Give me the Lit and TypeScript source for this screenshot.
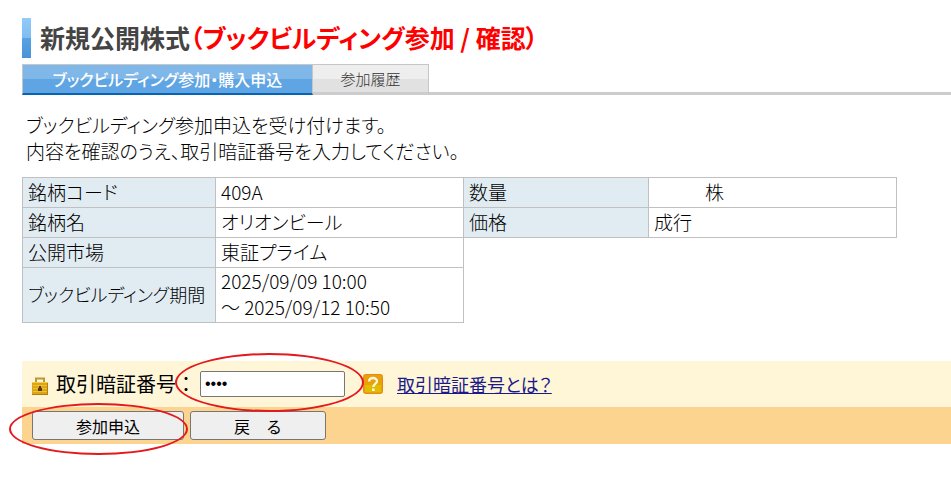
import { LitElement, html, css } from "lit";
import { customElement } from "lit/decorators.js";

@customElement("app-root")
export class AppRoot extends LitElement {
  static styles = css`
    :host {
      display: block;
      padding: 18px 0 40px 22px;
      background: #fff;
      color: #000;
      font-family: "Noto Sans CJK JP", sans-serif;
      font-size: 19px;
      font-weight: 300;
      line-height: 26px;
      font-feature-settings: "palt";
    }
    * {
      box-sizing: border-box;
    }
    .title {
      display: flex;
      align-items: center;
      gap: 9px;
      height: 40px;
      margin: 0 0 6px;
      font-size: 25px;
      font-weight: 700;
      color: #444;
      white-space: nowrap;
    }
    .title::before {
      content: "";
      width: 9px;
      align-self: stretch;
      background: linear-gradient(#93cbfa, #7fbcf0 50%, #57a3e4 50%, #4a92d6);
    }
    .title span {
      padding-bottom: 2px;
    }
    .title em {
      font-style: normal;
      color: #f00;
    }
    .tabs {
      display: flex;
      height: 31px;
      background: linear-gradient(#ccc, #ccc) bottom / 100% 3px no-repeat;
    }
    .tab {
      display: flex;
      align-items: center;
      justify-content: center;
      border: 1px solid #c6c6c6;
      font-size: 15px;
      text-decoration: none;
      white-space: nowrap;
    }
    .tab.current {
      width: 291px;
      border-bottom: 2px solid #0863b5;
      background: linear-gradient(#7fb7e9 50%, #5fa5e4 50%);
      color: #fff;
      font-size: 16px;
      font-weight: 500;
    }
    .tab.other {
      width: 116px;
      border-left: 0;
      border-bottom: 3px solid #ccc;
      background: linear-gradient(#eee 50%, #e1e1e1 50%);
      color: #333;
    }
    .lead {
      margin: 17px 0 13px 4px;
    }
    .sheet {
      padding-right: 54px;
    }
    table {
      width: 100%;
      table-layout: fixed;
      border-collapse: collapse;
    }
    .label-a {
      width: 193px;
    }
    .label-b {
      width: 185px;
    }
    th,
    td {
      height: 30px;
      padding: 0 5px 2px;
      border: 1px solid #c0c0c0;
      text-align: left;
      font-weight: 300;
      white-space: nowrap;
    }
    th {
      background: #e1ecf2;
    }
    .long {
      font-size: 18px;
    }
    .blank {
      border: 0;
    }
    .unit {
      padding-left: 56px;
    }
    form {
      margin-top: 38px;
    }
    .pin {
      display: flex;
      align-items: center;
      height: 46px;
      padding-left: 10px;
      background: #fff6d8;
    }
    .pin label {
      width: 144px;
      margin-left: 8px;
      font-size: 20px;
      font-weight: 400;
      font-feature-settings: normal;
      white-space: nowrap;
    }
    .pin input {
      display: block;
      width: 145px;
      height: 26px;
      padding: 0 4px;
      border: 1px solid #767676;
      border-radius: 2px;
      background: #fff;
      color: #000;
      font: 16px "Liberation Sans", sans-serif;
    }
    .pin .marked {
      margin-right: 18px;
    }
    .pin a {
      margin-left: 14px;
      color: #1a1a8c;
      font-size: 18px;
      font-weight: 400;
    }
    .lock {
      margin-top: 4px;
    }
    .actions {
      display: flex;
      gap: 6px;
      padding: 4px 10px;
      background: #fcd490;
    }
    button {
      display: block;
      width: 136px;
      height: 29px;
      padding: 0;
      border: 1px solid #767676;
      border-radius: 3px;
      background: #efefef;
      color: #000;
      font: 400 16px "Noto Sans CJK JP", sans-serif;
      line-height: 24px;
    }
    .submit {
      width: 152px;
    }
    .marked {
      position: relative;
    }
    .ring {
      position: absolute;
      border: 2px solid #e3191c;
      border-radius: 50%;
      pointer-events: none;
    }
    .pin-ring {
      inset: -18px -19px -15px -25px;
    }
    .submit-ring {
      inset: -8px -4px -15px -23px;
    }
    svg {
      display: block;
      flex: none;
    }
  `;

  render() {
    return html`
      <h1 class="title"><span>新規公開株式<em>（ブックビルディング参加 / 確認）</em></span></h1>
      <nav class="tabs">
        <a class="tab current" href="#apply" aria-current="page">ブックビルディング参加・購入申込</a>
        <a class="tab other" href="#history">参加履歴</a>
      </nav>
      <p class="lead">
        ブックビルディング参加申込を受け付けます。<br />
        内容を確認のうえ、取引暗証番号を入力してください。
      </p>
      <div class="sheet">
        <table>
          <colgroup>
            <col class="label-a" />
            <col />
            <col class="label-b" />
            <col />
          </colgroup>
          <tbody>
            <tr>
              <th scope="row">銘柄コード</th>
              <td>409A</td>
              <th scope="row">数量</th>
              <td class="unit">株</td>
            </tr>
            <tr>
              <th scope="row">銘柄名</th>
              <td>オリオンビール</td>
              <th scope="row">価格</th>
              <td>成行</td>
            </tr>
            <tr>
              <th scope="row">公開市場</th>
              <td>東証プライム</td>
              <td class="blank" colspan="2" rowspan="2"></td>
            </tr>
            <tr>
              <th class="long" scope="row">ブックビルディング期間</th>
              <td>2025/09/09 10:00<br />～ 2025/09/12 10:50</td>
            </tr>
          </tbody>
        </table>
      </div>
      <form @submit=${(e: Event) => e.preventDefault()}>
        <div class="pin">
          <svg class="lock" width="16" height="18" viewBox="0 0 16 18" aria-hidden="true">
            <path d="M4 6V1.5h8V6" fill="none" stroke="#b8983a" stroke-width="2" />
            <rect y="5" width="16" height="13" fill="#dba516" />
            <path d="M0 5.5h16" stroke="#f3cf48" />
            <path d="M1 8.5h14M1 11.5h14M1 14.5h14" stroke="#edc23a" />
            <path d="M0 17.5h16M15.5 6v12" stroke="#b87e08" />
            <path d="M6 14v-3h1V9h2v2h1v3z" fill="#5c3908" />
          </svg>
          <label for="pin">取引暗証番号：</label>
          <div class="marked">
            <input id="pin" type="password" value="1234" />
            <span class="ring pin-ring"></span>
          </div>
          <svg width="20" height="20" viewBox="0 0 20 20" aria-hidden="true">
            <rect x=".5" y=".5" width="19" height="19" rx="2" fill="#e9a00c" stroke="#e58a12" />
            <path d="M2 11h16v7H2z" fill="#dfbd00" />
            <path d="M6.2 7.5C6.2 2.8 14 3 14 7.2c0 2.7-3.7 2.8-3.7 5.8" fill="none" stroke="#fff8dc" stroke-width="2.3" />
            <rect x="9" y="14.5" width="2.6" height="2.5" fill="#fff8dc" />
          </svg>
          <a href="#about-pin">取引暗証番号とは？</a>
        </div>
        <div class="actions">
          <div class="marked">
            <button class="submit" type="submit">参加申込</button>
            <span class="ring submit-ring"></span>
          </div>
          <button type="button">戻　る</button>
        </div>
      </form>
    `;
  }
}
